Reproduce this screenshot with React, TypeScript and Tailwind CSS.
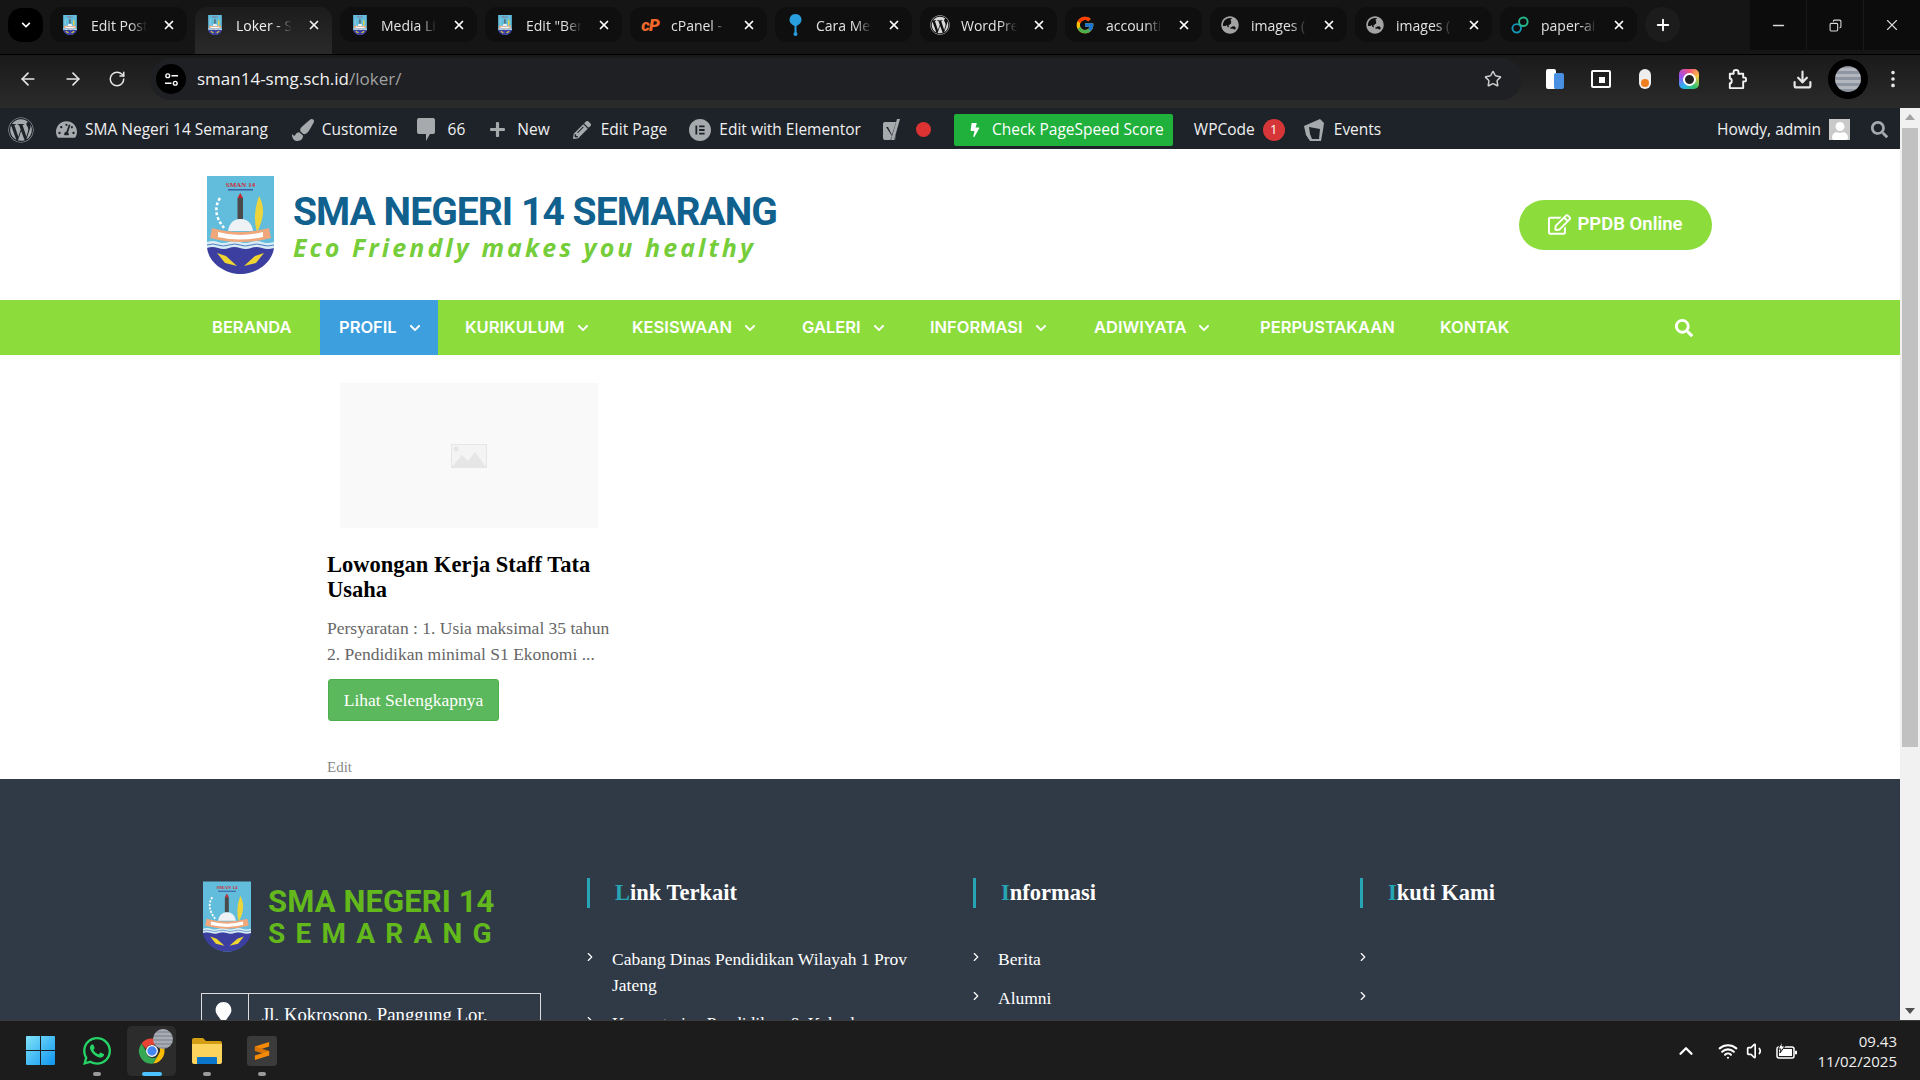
import {
  ArrowLeft,
  ArrowRight,
  ChevronRight,
  ChevronUp,
  Copy,
  Download,
  EllipsisVertical,
  Minus,
  Plus,
  RotateCw,
  Star,
  Volume1,
  Wifi,
  X,
} from "lucide-react";
import {
  FaBolt,
  FaChevronDown,
  FaGlobeAsia,
  FaMapMarker,
  FaPaintBrush,
  FaPencilAlt,
  FaPlus,
  FaRegEdit,
  FaSearch,
  FaTachometerAlt,
  FaUser,
  FaWhatsapp,
  FaWordpress,
} from "react-icons/fa";
import { FcGoogle } from "react-icons/fc";
import { SiElementor } from "react-icons/si";

function Shield({ className }: { className: string }) {
  return (
    <svg viewBox="0 0 67 98" className={className}>
      <path d="M0 0H67V65C67 84 50 98 33.500 98C17 98 0 84 0 65Z" fill="#62bcdc" />
      <path d="M0 71H67C66 86 50 98 33.500 98C17 98 1 86 0 71Z" fill="#3c3f9f" />
      <path d="M0 66q6-2 11 0t11 0 11 0 11 0 11 0 12 0v6q-6 2-12 0t-11 0-11 0-11 0-11 0-11 0Z" fill="#d8ecf5" />
      <path d="M0 69q6-2 11 0t11 0 11 0 11 0 11 0 12 0" fill="none" stroke="#4f7fc0" strokeWidth="1" />
      <text x="33.500" y="11" textAnchor="middle" fontSize="7" fontWeight="700" fill="#cf2d35" fontFamily="Liberation Serif, serif">
        SMAN 14
      </text>
      <rect x="21" y="13" width="25" height="1.500" fill="#3c5f9f" />
      <rect x="30.500" y="22" width="5.500" height="21" fill="#4a4a4a" />
      <path d="M30.500 22l2.750-5 2.750 5Z" fill="#c8252c" />
      <path d="M21 55q2-12 12.500-12t12.500 12Z" fill="#eef2f5" />
      <path d="M52 20q9 16-2 36q-5-16 2-36Z" fill="#ecd53c" />
      <path d="M13 22q-9 14 4 30" fill="none" stroke="#fff" strokeWidth="2.500" strokeDasharray="3 2" />
      <path d="M5 52Q33 60 62 52L64 62Q33 70 3 62Z" fill="#f0a77c" />
      <path d="M11 56Q33 62 56 56V61Q33 66 11 61Z" fill="#fff" />
      <path d="M10 77l9 3 11 10-12-3ZM57 77l-9 3-11 10 12-3Z" fill="#eed531" />
    </svg>
  );
}

function ChromeIcon() {
  return (
    <svg viewBox="0 0 48 48" className="size-[30px]">
      <path d="M24 4a20 20 0 0 1 17.300 10H24a10 10 0 0 0-9.500 6.900L7.300 12A20 20 0 0 1 24 4Z" fill="#ea4335" />
      <path d="M41.300 14A20 20 0 0 1 26 44l8.600-15A10 10 0 0 0 32 14Z" fill="#fbbc04" />
      <path d="M7.300 12A20 20 0 0 0 26 44l8-14a10 10 0 0 1-18.800-5Z" fill="#34a853" />
      <circle cx="24" cy="24" r="8.500" fill="#4285f4" stroke="#fff" strokeWidth="2" />
    </svg>
  );
}

function WindowsIcon() {
  return (
    <svg viewBox="0 0 29 29" className="size-[29px]">
      <defs>
        <linearGradient id="win" x1="0" y1="0" x2="1" y2="1">
          <stop offset="0" stopColor="#7fe4fb" />
          <stop offset="1" stopColor="#0f94ee" />
        </linearGradient>
      </defs>
      <path d="M1 0H14V14H0V1Q0 0 1 0ZM15 0H28Q29 0 29 1V14H15ZM0 15H14V29H1Q0 29 0 28ZM15 15H29V28Q29 29 28 29H15Z" fill="url(#win)" />
    </svg>
  );
}

function FolderIcon() {
  return (
    <svg viewBox="0 0 30 26" className="h-[26px] w-[30px]">
      <path d="M0 2Q0 0 2 0H11L14 3H28Q30 3 30 5V8H0Z" fill="#d39e14" />
      <path d="M0 6H30V24Q30 26 28 26H2Q0 26 0 24Z" fill="#fcd35c" />
      <path d="M5 20Q5 19 6 19H24Q25 19 25 20V26H5Z" fill="#0b76c9" />
    </svg>
  );
}

function SublimeIcon() {
  return (
    <div className="flex size-[30px] items-center justify-center rounded-[3px] bg-[#3b3b3b]">
      <svg viewBox="0 0 18 22" className="h-[20px] w-[16px]">
        <path d="M1 6L17 1V6L1 11Z" fill="#f58a07" />
        <path d="M1 6L17 11V16L1 11Z" fill="#d97506" />
        <path d="M1 16L17 11V16L1 21Z" fill="#f58a07" />
      </svg>
    </div>
  );
}

function PinIcon() {
  return (
    <svg viewBox="0 0 14 22" className="h-[22px] w-[15px]" fill="#2a9fe0">
      <path d="M7 0C3 0 1 3 1 6c0 3 3 5 5 6v6a1 1 0 0 0 2 0v-6c2-1 5-3 5-6 0-3-2-6-6-6Z" />
      <circle cx="7" cy="20" r="2" />
    </svg>
  );
}

function PaperIcon() {
  return (
    <svg viewBox="0 0 20 20" className="size-[19px]" fill="none" strokeWidth="2">
      <circle cx="6" cy="13" r="4.500" stroke="#1497b8" />
      <circle cx="13" cy="6" r="4.500" stroke="#25b98c" />
    </svg>
  );
}

const shield = <Shield className="h-[20px] w-[14px]" />;
const cpanel = <span className="font-['Roboto',sans-serif] text-[17px] leading-[20px] font-black tracking-[-1px] text-[#f1692a] italic">cP</span>;
const tabs = [
  { title: "Edit Post", icon: shield },
  { title: "Loker - SMA", icon: shield, active: true },
  { title: "Media Library", icon: shield },
  { title: 'Edit "Berita', icon: shield },
  { title: "cPanel - Tools", icon: cpanel },
  { title: "Cara Membuat", icon: <PinIcon /> },
  { title: "WordPress", icon: <FaWordpress className="size-[20px] text-[#d8d8d8]" /> },
  { title: "accounting", icon: <FcGoogle className="size-[20px]" /> },
  { title: "images (1)", icon: <FaGlobeAsia className="size-[18px] text-[#a3a3a3]" /> },
  { title: "images (2)", icon: <FaGlobeAsia className="size-[18px] text-[#a3a3a3]" /> },
  { title: "paper-ai", icon: <PaperIcon /> },
];

function TabStrip() {
  return (
    <div className="flex h-[55px] items-start justify-between border-b border-[#000] bg-[#151515]">
      <div className="flex items-start">
        <div className="mt-[8px] ml-[8px] flex h-[34px] w-[35px] items-center justify-center rounded-[14px] bg-black">
          <FaChevronDown className="size-[10px] text-white" />
        </div>
        <div className="ml-[7px] flex gap-2 pt-[7px]">
          {tabs.map((tab) =>
            tab.active ? (
              <div key={tab.title} className="flex h-[47px] w-[137px] items-start gap-[11px] rounded-t-[12px] bg-gradient-to-b from-[#1c1c1c] to-[#2a2a2a] pt-[8px] pr-[11px] pl-[10px] text-[14px] text-[#f0f0f0]">
                <div className="flex h-[20px] w-[20px] shrink-0 items-center justify-center">{tab.icon}</div>
                <span className="w-[56px] overflow-hidden whitespace-nowrap [mask-image:linear-gradient(90deg,#000_70%,transparent)]">{tab.title}</span>
                <X className="mt-[3px] ml-auto size-[14px] shrink-0 stroke-[3]" />
              </div>
            ) : (
              <div key={tab.title} className="flex h-[35px] w-[137px] items-start gap-[11px] rounded-[12px] bg-[#0f0f0f] pt-[8px] pr-[11px] pl-[10px] text-[14px] text-[#e2e2e2]">
                <div className="flex h-[20px] w-[20px] shrink-0 items-center justify-center">{tab.icon}</div>
                <span className="w-[56px] overflow-hidden whitespace-nowrap [mask-image:linear-gradient(90deg,#000_70%,transparent)]">{tab.title}</span>
                <X className="mt-[3px] ml-auto size-[14px] shrink-0 stroke-[3] text-white" />
              </div>
            ),
          )}
          <div className="flex size-[35px] items-center justify-center rounded-full bg-[#1c1c1c]">
            <Plus className="size-[18px] stroke-[2.5] text-white" />
          </div>
        </div>
      </div>
      <div className="flex h-[50px] w-[170px] bg-[#0c0c0c] text-[#d8d8d8]">
        <div className="flex flex-1 items-center justify-center border-r border-[#1a1a1a]">
          <Minus className="size-[17px]" />
        </div>
        <div className="flex flex-1 items-center justify-center border-r border-[#1a1a1a]">
          <Copy className="size-[13px] -scale-x-100" />
        </div>
        <div className="flex flex-1 items-center justify-center">
          <X className="size-[18px] stroke-[1.5]" />
        </div>
      </div>
    </div>
  );
}

function Toolbar() {
  return (
    <div className="flex h-[53px] items-center bg-gradient-to-b from-[#1a1a1a] to-[#2b2b2b] pb-[5px] text-[#e6e6e6]">
      <div className="flex w-[150px] items-center gap-[25px] pl-[18px]">
        <ArrowLeft className="size-[20px] stroke-[2]" />
        <ArrowRight className="size-[20px] stroke-[2]" />
        <RotateCw className="size-[18px] stroke-[2]" />
      </div>
      <div className="flex h-[42px] w-[1372px] items-center rounded-full bg-[#1f2023] pr-[20px] pl-[6px]">
        <div className="mr-[11px] flex size-[30px] items-center justify-center rounded-full bg-black">
          <svg viewBox="0 0 16 16" className="size-[15px]" fill="none" stroke="#fff" strokeWidth="1.500">
            <circle cx="4" cy="4" r="2" />
            <path d="M8 4H15M1 12H8" />
            <circle cx="12" cy="12" r="2" />
          </svg>
        </div>
        <span className="font-['Open_Sans',sans-serif] text-[17px] text-[#f2f2f2]">
          sman14-smg.sch.id<span className="text-[#a0a0a0]">/loker/</span>
        </span>
        <Star className="ml-auto size-[18px] stroke-[2] text-[#cfcfcf]" />
      </div>
      <div className="ml-[24px] flex items-center">
        <div className="relative h-[20px] w-[18px]">
          <div className="h-[20px] w-[10px] rounded-[2px] bg-white" />
          <div className="absolute right-0 bottom-0 h-[16px] w-[10px] rounded-[2px] bg-[#4a90e2]" />
        </div>
        <div className="ml-[27px] flex h-[18px] w-[20px] items-center justify-center rounded-[2px] border-2 border-white">
          <div className="mt-[2px] ml-[2px] size-[6px] bg-white" />
        </div>
        <div className="relative ml-[28px] h-[20px] w-[12px] rounded-full bg-[#eee]">
          <div className="absolute bottom-[2px] left-[2px] size-[8px] rounded-full bg-[#ee7f1f]" />
        </div>
        <div className="ml-[28px] flex size-[20px] items-center justify-center rounded-[5px] bg-[conic-gradient(#f0517e,#f6c344,#33c26b,#2ab4f0,#a04df0,#f0517e)]">
          <div className="flex size-[13px] items-center justify-center rounded-full border-2 border-white bg-[#222]" />
        </div>
        <svg viewBox="0 0 22 22" className="ml-[27px] size-[21px]" fill="none" stroke="#f2f2f2" strokeWidth="2" strokeLinejoin="round">
          <path d="M4 5H8V3Q8 1 10.500 1T13 3V5H18V9H20Q21 9 21 11T20 13H18V20H4V15Q6 15 6 12.500T4 10Z" />
        </svg>
        <Download className="ml-[45px] size-[21px] stroke-[2.5]" />
        <div className="ml-[15px] flex size-[40px] items-center justify-center rounded-full bg-black">
          <div className="size-[26px] rounded-full bg-[repeating-linear-gradient(0deg,#8d95a1_0_3px,#b4b8be_3px_6px)]" />
        </div>
        <EllipsisVertical className="ml-[14px] size-[22px]" />
      </div>
    </div>
  );
}

function AdminItem({ icon, label, className }: { icon?: React.ReactNode; label?: string; className: string }) {
  return (
    <div className={`flex items-center gap-[8px] ${className}`}>
      {icon}
      {label && <span>{label}</span>}
    </div>
  );
}

function AdminBar() {
  const ic = "text-[#a7aaad]";
  return (
    <div className="flex h-[41px] shrink-0 items-center bg-[#1e2329] pt-[2px] pl-[8px] font-['Open_Sans',sans-serif] text-[15.500px] whitespace-nowrap text-[#f0f0f1]">
      <FaWordpress className={`size-[26px] ${ic}`} />
      <AdminItem className="ml-[22px]" icon={<FaTachometerAlt className={`size-[21px] ${ic}`} />} label="SMA Negeri 14 Semarang" />
      <AdminItem className="ml-[24px]" icon={<FaPaintBrush className={`size-[22px] ${ic}`} />} label="Customize" />
      <AdminItem
        className="ml-[19px] gap-[13px]"
        icon={
          <svg viewBox="0 0 18 24" className="h-[24px] w-[18px]" fill="#a7aaad">
            <path d="M2 0H16Q18 0 18 2V14Q18 16 16 16H13L9 23V16H2Q0 16 0 14V2Q0 0 2 0Z" />
          </svg>
        }
        label="66"
      />
      <AdminItem className="ml-[24px] gap-[11px]" icon={<FaPlus className={`size-[17px] ${ic}`} />} label="New" />
      <AdminItem className="ml-[23px] gap-[10px]" icon={<FaPencilAlt className={`size-[18px] ${ic}`} />} label="Edit Page" />
      <AdminItem className="ml-[22px]" icon={<SiElementor className={`size-[22px] ${ic}`} />} label="Edit with Elementor" />
      <svg viewBox="0 0 20 24" className="ml-[22px] h-[24px] w-[20px]">
        <path d="M2 4H15L12 22H2Q0 22 0 20V6Q0 4 2 4Z" fill="#a7aaad" />
        <path d="M5 9L9 17L14 1H18L11 23H7L9 18L3 9Z" fill="#1e2329" />
        <path d="M14 1H17L11 22H8Z" fill="#a7aaad" />
      </svg>
      <div className="ml-[13px] size-[15px] rounded-full bg-[#dc3232]" />
      <div className="ml-[23px] flex h-[32px] w-[219px] items-center justify-center gap-[10px] rounded-[2px] bg-[#20b03c] pl-[5px] text-white">
        <FaBolt className="size-[14px]" />
        <span>Check PageSpeed Score</span>
      </div>
      <span className="ml-[21px]">WPCode</span>
      <div className="ml-[8px] flex size-[22px] items-center justify-center rounded-full bg-[#d63638] text-[13px] text-white">1</div>
      <svg viewBox="0 0 22 24" className="ml-[18px] h-[24px] w-[22px]" fill="#a7aaad">
        <path d="M1 8L17 1L21 5L20 12L18 23H7L3 17ZM6 9L7 16L9 21H16L17 11Z" />
      </svg>
      <span className="ml-[9px]">Events</span>
      <div className="ml-auto flex items-center">
        <span>Howdy, admin</span>
        <div className="ml-[8px] flex size-[21px] items-end justify-center overflow-hidden bg-[#c9c9c9]">
          <FaUser className="size-[18px] text-white" />
        </div>
        <FaSearch className={`mr-[12px] ml-[21px] size-[17px] ${ic}`} />
      </div>
    </div>
  );
}

const navItems = [
  { label: "BERANDA", w: "w-[119px]" },
  { label: "PROFIL", w: "w-[118px]", caret: true, active: true },
  { label: "KURIKULUM", w: "w-[159px]", caret: true },
  { label: "KESISWAAN", w: "w-[162px]", caret: true },
  { label: "GALERI", w: "w-[120px]", caret: true },
  { label: "INFORMASI", w: "w-[156px]", caret: true },
  { label: "ADIWIYATA", w: "w-[158px]", caret: true },
  { label: "PERPUSTAKAAN", w: "w-[172px]" },
  { label: "KONTAK", w: "w-[108px]" },
];

function Header() {
  return (
    <>
      <div className="flex h-[151px] shrink-0 items-center justify-between bg-white pr-[188px] pl-[207px]">
        <div className="flex items-center gap-[19px]">
          <Shield className="h-[98px] w-[67px]" />
          <div className="mt-[6px] flex flex-col whitespace-nowrap">
            <span className="font-['Roboto',sans-serif] text-[39px] leading-[40px] font-bold tracking-[-0.95px] text-[#11618f]">SMA NEGERI 14 SEMARANG</span>
            <span className="font-['Open_Sans',sans-serif] text-[25px] leading-[31px] font-bold tracking-[3.05px] text-[#76cd3a] italic">Eco Friendly makes you healthy</span>
          </div>
        </div>
        <div className="flex h-[50px] w-[193px] items-center justify-center gap-[6px] rounded-full bg-[#8cdc3c] font-['Roboto',sans-serif] text-[18.500px] font-semibold text-white">
          <FaRegEdit className="size-[23px]" />
          <span>PPDB Online</span>
        </div>
      </div>
      <div className="flex h-[55px] shrink-0 items-center bg-[#8cdc3c] pl-[193px] font-['Inter',sans-serif] text-[16.500px] font-semibold text-white">
        <div className="flex h-full gap-2">
          {navItems.map((item) => (
            <div key={item.label} className={`flex h-full items-center gap-[12px] px-[19px] ${item.w} ${item.active ? "bg-[#3d9fdd]" : ""}`}>
              <span>{item.label}</span>
              {item.caret && <FaChevronDown className="size-[12px] shrink-0" />}
            </div>
          ))}
        </div>
        <FaSearch className="ml-[146px] size-[18px]" />
      </div>
    </>
  );
}

function PostCard() {
  return (
    <div className="h-[424px] shrink-0 bg-white pt-[28px] pl-[327px] font-['Liberation_Serif',serif]">
      <div className="ml-[13px] flex h-[145px] w-[258px] items-center justify-center bg-[#f9f9f9]">
        <svg viewBox="0 0 36 24" className="h-[24px] w-[36px]">
          <rect x="0.500" y="0.500" width="35" height="23" fill="#f4f4f4" stroke="#e6e6e6" />
          <circle cx="5" cy="5" r="2.500" fill="#e6e6e6" />
          <path d="M1 23L11 11L17 17L24 8L35 23Z" fill="#e6e6e6" />
        </svg>
      </div>
      <h2 className="mt-[24px] w-[285px] text-[22.500px] leading-[25px] font-bold text-black">Lowongan Kerja Staff Tata Usaha</h2>
      <p className="mt-[13px] w-[300px] text-[17.500px] leading-[26px] text-[#666]">
        Persyaratan : 1. Usia maksimal 35 tahun
        <br />
        2. Pendidikan minimal S1 Ekonomi ...
      </p>
      <div className="mt-[12px] ml-[1px] flex h-[42px] w-[171px] items-center justify-center rounded-[3px] border border-[#4cae4c] bg-[#5cb85c] text-[17.500px] text-white">Lihat Selengkapnya</div>
      <div className="mt-[35px] text-[15px] text-[#888]">Edit</div>
    </div>
  );
}

function FooterLink({ label }: { label: string }) {
  return (
    <div className="flex items-start">
      <ChevronRight className="mt-[4px] -ml-[4px] size-[14px] stroke-[2] text-white" />
      <span className="ml-[15px] w-[320px] text-[17.500px] leading-[26px] text-white">{label}</span>
    </div>
  );
}

function FooterHeading({ first, rest }: { first: string; rest: string }) {
  return (
    <div className="flex h-[30px] items-center border-l-[3px] border-[#26a5b5] pl-[25px] text-[22.500px] font-bold text-white">
      <span className="text-[#26a5b5]">{first}</span>
      {rest}
    </div>
  );
}

function Footer() {
  return (
    <div className="h-[241px] shrink-0 overflow-hidden bg-[#303a47] pt-[99px] pl-[201px] font-['Liberation_Serif',serif]">
      <div className="grid grid-cols-[386px_386px_387px_auto]">
        <div>
          <div className="mt-[3px] ml-[2px] flex items-center gap-[17px]">
            <Shield className="h-[71px] w-[48px]" />
            <div className="flex flex-col font-['Roboto',sans-serif] font-bold whitespace-nowrap text-[#63b81c]">
              <span className="text-[31px] leading-[34px] tracking-[0.1px]">SMA NEGERI 14</span>
              <span className="text-[28px] leading-[30px] tracking-[10.200px]">SEMARANG</span>
            </div>
          </div>
          <div className="mt-[41px] flex h-[80px] w-[340px] border border-[#ddd]">
            <div className="flex w-[47px] justify-center border-r border-[#ddd] pt-[8px] pr-[3px]">
              <FaMapMarker className="size-[21px] text-white" />
            </div>
            <span className="pt-[8px] pl-[13px] text-[18.800px] leading-[26px] text-white">Jl. Kokrosono, Panggung Lor,</span>
          </div>
        </div>
        <div>
          <FooterHeading first="L" rest="ink Terkait" />
          <div className="mt-[38px] flex flex-col gap-[12px]">
            <FooterLink label="Cabang Dinas Pendidikan Wilayah 1 Prov Jateng" />
            <FooterLink label="Kementerian Pendidikan & Kebudayaan" />
          </div>
        </div>
        <div>
          <FooterHeading first="I" rest="nformasi" />
          <div className="mt-[38px] flex flex-col gap-[13px]">
            <FooterLink label="Berita" />
            <FooterLink label="Alumni" />
          </div>
        </div>
        <div>
          <FooterHeading first="I" rest="kuti Kami" />
          <div className="mt-[38px] flex flex-col gap-[25px]">
            <ChevronRight className="mt-[4px] -ml-[4px] size-[14px] stroke-[2] text-white" />
            <ChevronRight className="-ml-[4px] size-[14px] stroke-[2] text-white" />
          </div>
        </div>
      </div>
    </div>
  );
}

function Scrollbar() {
  return (
    <div className="flex w-[20px] shrink-0 flex-col items-center bg-[#f1f1f1]">
      <div className="mt-[6px] size-0 border-x-[5px] border-b-[6px] border-x-transparent border-b-[#a3a3a3]" />
      <div className="mt-[8px] h-[619px] w-[16px] bg-[#c1c1c1]" />
      <div className="mt-auto mb-[6px] size-0 border-x-[5px] border-t-[6px] border-x-transparent border-t-[#505050]" />
    </div>
  );
}

function Taskbar() {
  return (
    <div className="flex h-[60px] shrink-0 items-center border-t border-[#3a3a3a] bg-[#1c1c1c] text-white">
      <div className="ml-[26px]">
        <WindowsIcon />
      </div>
      <div className="relative ml-[26px] flex h-[50px] w-[32px] items-center justify-center">
        <FaWhatsapp className="size-[32px] text-[#25d366]" />
        <div className="absolute bottom-0 h-[4px] w-[8px] rounded-full bg-[#9a9a9a]" />
      </div>
      <div className="relative ml-[14px] flex h-[50px] w-[49px] items-center justify-center rounded-[5px] bg-[#2c2c2c]">
        <ChromeIcon />
        <div className="absolute top-[3px] right-[3px] size-[20px] rounded-full bg-[repeating-linear-gradient(0deg,#8d95a1_0_2px,#a9adb3_2px_4px)]" />
        <div className="absolute bottom-0 h-[4px] w-[20px] rounded-full bg-[#4cc2ff]" />
      </div>
      <div className="relative ml-[16px] flex h-[50px] w-[30px] items-center justify-center">
        <FolderIcon />
        <div className="absolute bottom-0 h-[4px] w-[8px] rounded-full bg-[#9a9a9a]" />
      </div>
      <div className="relative ml-[25px] flex h-[50px] w-[30px] items-center justify-center">
        <SublimeIcon />
        <div className="absolute bottom-0 h-[4px] w-[8px] rounded-full bg-[#9a9a9a]" />
      </div>
      <div className="mr-[23px] ml-auto flex items-center">
        <ChevronUp className="size-[22px] stroke-[2.5]" />
        <Wifi className="ml-[21px] size-[20px] stroke-[2.5]" />
        <Volume1 className="ml-[8px] size-[20px]" />
        <svg viewBox="0 0 22 18" className="ml-[10px] h-[18px] w-[22px]" fill="none" stroke="#fff" strokeWidth="1.500">
          <rect x="1" y="5" width="17" height="11" rx="2" />
          <rect x="3" y="7" width="13" height="7" fill="#fff" stroke="none" />
          <rect x="19" y="8.500" width="2" height="4" rx="1" fill="#fff" stroke="none" />
          <path d="M6 0L2 7H5L4 11L9 4H6Z" fill="#fff" stroke="#1c1c1c" strokeWidth="1" />
        </svg>
        <div className="ml-[19px] flex flex-col items-end font-['Open_Sans',sans-serif] text-[15px] leading-[20px] text-[#f0f0f0]">
          <span>09.43</span>
          <span>11/02/2025</span>
        </div>
      </div>
    </div>
  );
}

export default function App() {
  return (
    <div className="flex h-screen w-screen flex-col overflow-hidden font-['Open_Sans',sans-serif]">
      <TabStrip />
      <Toolbar />
      <div className="flex min-h-0 flex-1">
        <div className="flex min-w-0 flex-1 flex-col overflow-hidden">
          <AdminBar />
          <Header />
          <PostCard />
          <Footer />
        </div>
        <Scrollbar />
      </div>
      <Taskbar />
    </div>
  );
}
